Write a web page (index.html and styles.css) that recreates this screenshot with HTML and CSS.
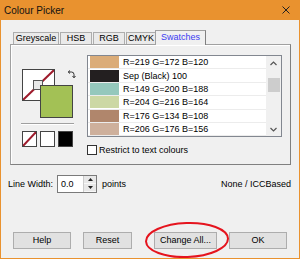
FILE: index.html
```html
<!DOCTYPE html>
<html lang="en">
<head>
    <meta charset="UTF-8">
    <title>Colour Picker</title>
    <link rel="stylesheet" href="styles.css">
</head>
<body>
<div class="window">
    <div class="titlebar">
        <span class="title">Colour Picker</span>
        <svg class="close" width="8" height="8" viewBox="0 0 8 8"><path d="M0.5 0.5 L7.5 7.5 M7.5 0.5 L0.5 7.5" stroke="#222" stroke-width="1"/></svg>
    </div>
    <div class="tabs">
        <div class="tab tab-grey">Greyscale</div>
        <div class="tab tab-hsb">HSB</div>
        <div class="tab tab-rgb">RGB</div>
        <div class="tab tab-cmyk">CMYK</div>
        <div class="tab active">Swatches</div>
    </div>
    <div class="panel">
        <div class="current">
            <div class="preview">
                <div class="back">
                    <svg width="31" height="30" viewBox="0 0 31 30"><path d="M0 30 L31 0" stroke="#9e1b2c" stroke-width="2"/></svg>
                    <div class="back-inner"></div>
                </div>
                <div class="front"></div>
                <svg class="swap" width="9" height="9" viewBox="0 0 9 9">
                    <path d="M1.5 2 H4.5 Q7 2 7 4.5 V7.5" fill="none" stroke="#333" stroke-width="1"/>
                    <path d="M3 0.5 L1.2 2 L3 3.5" fill="none" stroke="#333" stroke-width="1"/>
                    <path d="M5.5 6 L7 7.8 L8.5 6" fill="none" stroke="#333" stroke-width="1"/>
                </svg>
            </div>
            <div class="sep"></div>
            <div class="presets">
                <div class="preset none">
                    <svg width="13" height="14" viewBox="0 0 13 14"><path d="M0 14 L13 0" stroke="#9e1b2c" stroke-width="2"/></svg>
                </div>
                <div class="preset white"></div>
                <div class="preset black"></div>
            </div>
        </div>
        <div class="right">
            <div class="list">
                <div class="rows">
                    <div class="row"><span class="chip" style="background: rgb(219,172,120)"></span>R=219 G=172 B=120</div>
                    <div class="row"><span class="chip" style="background: #231f20"></span>Sep (Black) 100</div>
                    <div class="row"><span class="chip" style="background: rgb(149,200,188)"></span>R=149 G=200 B=188</div>
                    <div class="row"><span class="chip" style="background: rgb(204,216,164)"></span>R=204 G=216 B=164</div>
                    <div class="row"><span class="chip" style="background: rgb(176,134,108)"></span>R=176 G=134 B=108</div>
                    <div class="row"><span class="chip" style="background: rgb(206,176,156)"></span>R=206 G=176 B=156</div>
                </div>
                <div class="scrollbar">
                    <svg class="arrow" width="7" height="5" viewBox="0 0 7 5"><path d="M0.5 4 L3.5 1 L6.5 4" fill="none" stroke="#555" stroke-width="1.2"/></svg>
                    <div class="thumb"></div>
                    <svg class="arrow" width="7" height="5" viewBox="0 0 7 5"><path d="M0.5 1 L3.5 4 L6.5 1" fill="none" stroke="#555" stroke-width="1.2"/></svg>
                </div>
            </div>
            <div class="restrict"><span class="check"></span>Restrict to text colours</div>
        </div>
    </div>
    <div class="width-row">
        <span class="label">Line Width:</span>
        <div class="spin">
            <div class="spin-value">0.0</div>
            <div class="spin-buttons">
                <div class="spin-btn"><svg width="5" height="3" viewBox="0 0 5 3"><path d="M0 3 L2.5 0 L5 3 Z" fill="#222"/></svg></div>
                <div class="spin-btn"><svg width="5" height="3" viewBox="0 0 5 3"><path d="M0 0 L2.5 3 L5 0 Z" fill="#222"/></svg></div>
            </div>
        </div>
        <span class="unit">points</span>
        <span class="space">None / ICCBased</span>
    </div>
    <div class="buttons">
        <div class="btn btn-help">Help</div>
        <div class="btn btn-reset">Reset</div>
        <div class="btn btn-change">Change All...</div>
        <div class="btn btn-ok">OK</div>
    </div>
    <svg class="circle" width="92" height="42" viewBox="0 0 92 42">
        <ellipse cx="45" cy="20" rx="41" ry="17" fill="none" stroke="#e5141e" stroke-width="2" transform="rotate(-2 45 20)"/>
    </svg>
</div>
</body>
</html>
```

FILE: styles.css
```css
body {
    margin: 0;
    padding: 0;
    font-family: 'Liberation Sans', Arial, sans-serif;
    font-size: 9px;
    color: #000;
    background: #fff;
}

.window {
    position: relative;
    width: 300px;
    height: 259px;
    box-sizing: border-box;
    border: 1px solid #e9922f;
    border-top: none;
    background-color: #f0f0f0;
    overflow: hidden;
}

.titlebar {
    display: flex;
    align-items: center;
    justify-content: space-between;
    height: 20px;
    margin: 0 -1px;
    padding: 0 10px 0 4px;
    background-color: #e9922f;
}

.title {
    font-size: 10px;
    color: #111;
}

.tabs {
    display: flex;
    align-items: flex-end;
    height: 14px;
    margin: 10px 0 0 12px;
    position: relative;
    z-index: 1;
}

.tab {
    height: 12px;
    box-sizing: border-box;
    border: 1px solid #adadad;
    border-bottom: none;
    background-color: #eaeaea;
    line-height: 11px;
    text-align: center;
    margin-right: 1px;
}

.tab-grey { width: 46px; }
.tab-hsb { width: 32px; }
.tab-rgb { width: 32px; }
.tab-cmyk { width: 30px; margin-right: -1px; }

.tab.active {
    width: 51px;
    height: 15px;
    margin-bottom: -1px;
    background-color: #f0f0f0;
    border-color: #a0a0a0;
    border-right-color: #808080;
    color: #3b3bf2;
    line-height: 13px;
}

.panel {
    display: flex;
    width: 281px;
    height: 121px;
    box-sizing: border-box;
    margin-left: 9px;
    padding: 10px 8px 0 10px;
    border: 1px solid #a0a0a0;
    border-right-color: #808080;
    border-bottom-color: #808080;
    box-shadow: inset 1px 1px 0 #fff;
}

.current {
    width: 53px;
    margin-top: 14px;
}

.preview {
    position: relative;
    width: 52px;
    height: 50px;
    margin-left: 1px;
}

.back {
    position: absolute;
    left: 0;
    top: 0;
    width: 33px;
    height: 32px;
    box-sizing: border-box;
    border: 1px solid #444;
    background-color: #fff;
}

.back svg {
    display: block;
}

.back-inner {
    position: absolute;
    left: 10px;
    top: 10px;
    width: 10px;
    height: 10px;
    box-sizing: border-box;
    border: 1px solid #555;
    background-color: #e8e8e8;
}

.front {
    position: absolute;
    left: 18px;
    top: 16px;
    width: 33px;
    height: 33px;
    box-sizing: border-box;
    border: 1px solid #444;
    background-color: #a3c155;
}

.swap {
    position: absolute;
    left: 45px;
    top: 1px;
}

.sep {
    height: 1px;
    margin-top: 4px;
    background-color: #a0a0a0;
    border-bottom: 1px solid #fff;
}

.presets {
    display: flex;
    gap: 3px;
    margin: 6px 0 0 1px;
}

.preset {
    width: 15px;
    height: 16px;
    box-sizing: border-box;
    border: 1px solid #444;
    background-color: #fff;
}

.preset svg {
    display: block;
}

.preset.black {
    background-color: #000;
}

.right {
    margin-left: 13px;
}

.list {
    display: flex;
    width: 195px;
    height: 82px;
    box-sizing: border-box;
    border: 1px solid #828790;
    background-color: #fff;
}

.rows {
    flex: 1;
    overflow: hidden;
}

.row {
    display: flex;
    align-items: center;
    height: 13.4px;
    box-sizing: border-box;
    border-bottom: 1px solid #ececec;
    white-space: nowrap;
}

.chip {
    width: 29px;
    height: 12px;
    margin: 0 4px 0 2px;
}

.scrollbar {
    display: flex;
    flex-direction: column;
    align-items: center;
    width: 15px;
    background-color: #f0f0f0;
}

.arrow {
    margin: 5px 0;
}

.arrow:last-child {
    margin-top: auto;
    margin-bottom: 4px;
}

.thumb {
    width: 12px;
    height: 14px;
    margin-top: 7px;
    background-color: #cdcdcd;
}

.restrict {
    display: flex;
    align-items: center;
    margin-top: 8px;
    white-space: nowrap;
}

.check {
    width: 10px;
    height: 10px;
    box-sizing: border-box;
    border: 1px solid #333;
    background-color: #fff;
    margin-right: 2px;
}

.width-row {
    display: flex;
    align-items: center;
    height: 18px;
    margin: 10px 8px 0 7px;
}

.label {
    width: 49px;
}

.spin {
    display: flex;
    height: 18px;
    box-sizing: border-box;
    border: 1px solid #7a7a7a;
}

.spin-value {
    width: 25px;
    padding-left: 3px;
    box-sizing: border-box;
    background-color: #fff;
    line-height: 16px;
}

.spin-buttons {
    display: flex;
    flex-direction: column;
    width: 12px;
    border-left: 1px solid #ccc;
}

.spin-btn {
    flex: 1;
    display: flex;
    align-items: center;
    justify-content: center;
    background-color: #e8e8e8;
    border-bottom: 1px solid #f8f8f8;
}

.spin-btn svg {
    display: block;
}

.unit {
    margin-left: 5px;
}

.space {
    margin-left: auto;
}

.buttons {
    display: flex;
    margin: 39px 0 0 12px;
}

.btn {
    height: 17px;
    box-sizing: border-box;
    border: 1px solid #adadad;
    background-color: #e1e1e1;
    line-height: 15px;
    text-align: center;
}

.btn-help { width: 58px; }
.btn-reset { width: 49px; margin-left: 12px; }
.btn-change { width: 63px; margin-left: 22px; }
.btn-ok { width: 58px; margin-left: 12px; }

.circle {
    position: absolute;
    left: 141px;
    top: 220px;
}
```
